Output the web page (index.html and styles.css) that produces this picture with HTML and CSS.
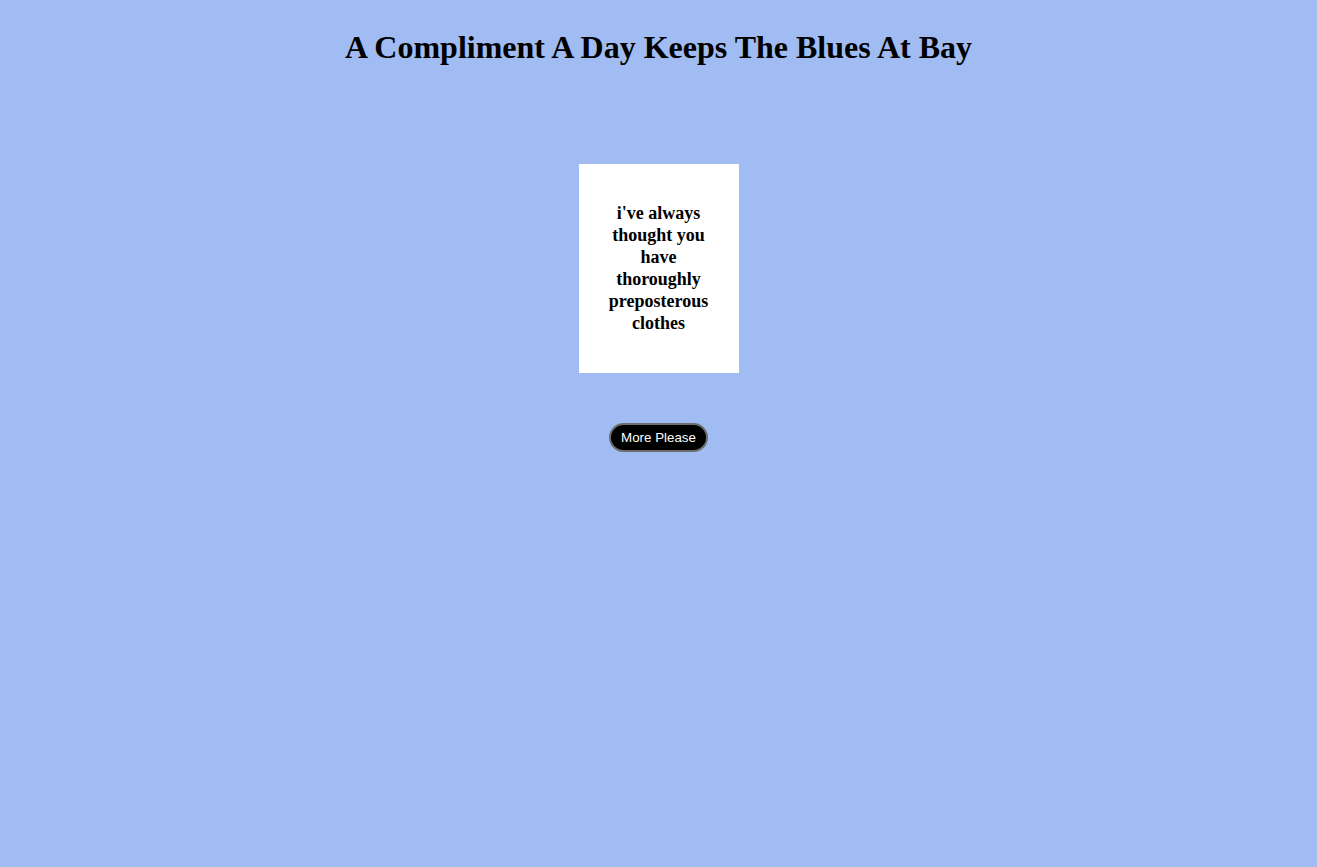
FILE: index.html
```html
<!DOCTYPE html>
<html>
<head>
<meta charset="utf-8">
<title>Compliments</title>
<link rel="stylesheet" href="styles.css">
</head>
<body>
<h1 class="title">A Compliment A Day Keeps The Blues At Bay</h1>
<main class="main">
  <div class="card">
    <p class="compliment">i've always thought you have thoroughly preposterous clothes</p>
  </div>
  <button class="more">More Please</button>
</main>
</body>
</html>
```
FILE: styles.css
```css
html, body {
  background: #a0bcf2;
}
body {
  margin: 8px;
  font-family: "Liberation Serif", "Times New Roman", serif;
  color: #000;
}
.title {
  font-size: 32px;
  font-weight: bold;
  text-align: center;
  margin: 21px 0 0;
  line-height: 37px;
}
.main {
  display: flex;
  flex-direction: column;
  align-items: center;
  padding-top: 98px;
}
.card {
  width: 160px;
  height: 209px;
  box-sizing: border-box;
  background: #fff;
  display: flex;
  align-items: center;
  justify-content: center;
  padding: 0 22px 2px;
}
.compliment {
  margin: 0;
  font-size: 18px;
  font-weight: bold;
  line-height: 22px;
  text-align: center;
}
.more {
  margin-top: 50px;
  width: 99px;
  height: 29px;
  background: #000;
  color: #fff;
  border: 2px solid #6d6d6d;
  border-radius: 15px;
  font-family: "Liberation Sans", Arial, sans-serif;
  font-size: 13.33px;
  padding: 0;
  cursor: pointer;
}
```
